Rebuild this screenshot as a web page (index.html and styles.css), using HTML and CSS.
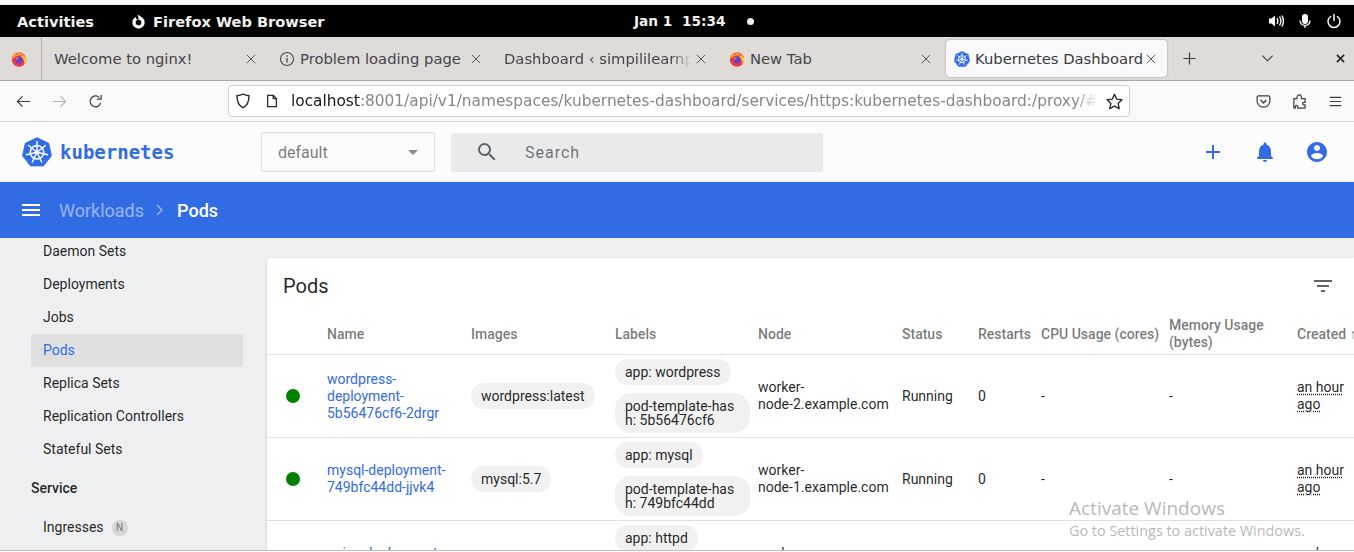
FILE: index.html
```html
<!DOCTYPE html>
<html lang="en">
<head>
<meta charset="utf-8">
<title>Kubernetes Dashboard</title>
<link rel="stylesheet" href="styles.css">
</head>
<body>
<svg class="defs" width="0" height="0" aria-hidden="true">
  <defs>
    <symbol id="fx" viewBox="0 0 16 16">
      <circle cx="8" cy="8.6" r="7.2" fill="#e8384f"/>
      <path d="M1 8.5C1 5 3 2.6 5 1.6 4.8 2.6 5 3.4 5.6 3.8 7 1.6 9.4.8 10.6.8 10 1.6 10 2.4 10.6 3c2 .2 4 2.2 4.4 5C14 5 11 4 8 4.4 5 4.8 3 6 1 8.5Z" fill="#ff9a2e"/>
      <path d="M15.2 7.6c.3 3-1.2 5-2.8 6 1-1.6 1-3.4 0-5-.6-1.6-1.8-3-3.6-3.6 3-.6 5.6.4 6.4 2.6Z" fill="#ffc42e"/>
      <circle cx="8" cy="8.8" r="3.6" fill="#6b3fc4"/>
      <path d="M4.4 8c.8-1.4 2.2-2 3.8-1.600C7 6.800 6.400 7.400 6.600 8.400 5.600 8.800 5 8.600 4.400 8Z" fill="#ff7a3c"/>
    </symbol>
    <symbol id="k8s" viewBox="0 0 32 32">
      <path d="M16 .8 28.400 6.700 31.400 20 22.900 30.800H9.100L.6 20 3.600 6.700Z" fill="#326ce5" stroke="#326ce5" stroke-linejoin="round"/>
      <g fill="none" stroke="#fff">
        <circle cx="16" cy="16.300" r="7.200" stroke-width="1.700"/>
        <path stroke-width="1.500" stroke-linecap="round" d="M16 16.300V4.800M16 16.300 25 9.100M16 16.300 27.200 18.900M16 16.300 21 26.700M16 16.300 11 26.700M16 16.300 4.800 18.900M16 16.300 7 9.100"/>
      </g>
      <circle cx="16" cy="16.300" r="2" fill="#fff"/>
    </symbol>
    <symbol id="close" viewBox="0 0 10 10">
      <path stroke="#55555c" stroke-width="1" d="M.8.8l8.400 8.400M9.200.8.800 9.200"/>
    </symbol>
  </defs>
</svg>

<div class="strip"></div>

<header class="gnome">
  <span class="act">Activities</span>
  <span class="app">
    <svg class="app-ico" viewBox="0 0 16 16"><circle cx="8" cy="9" r="4.800" fill="none" stroke="#fff" stroke-width="3.600"/><path fill="#000" d="M4 1h4l1 4.500-3 .3Z"/><path fill="#fff" d="M7 .8 10.500 2.500 8.500 5.800Z"/></svg>
    Firefox Web Browser
  </span>
  <span class="clock">Jan 1&nbsp; 15:34</span>
  <span class="dot"></span>
  <span class="tray">
    <svg class="tray-ico" viewBox="0 0 16 16"><path fill="#fff" d="M1 5.500h2.500L7 2.500v11l-3.500-3H1Z"/><path fill="none" stroke="#fff" stroke-width="1.400" d="M9 5c1 1.800 1 4.200 0 6M11.500 3.500c1.700 2.700 1.700 6.300 0 9M13.800 2.500c2 3.300 2 7.700 0 11"/></svg>
    <svg class="tray-ico" viewBox="0 0 16 16"><rect x="5" y="1" width="6" height="10" rx="3" fill="#fff"/><path fill="none" stroke="#fff" stroke-width="1.300" d="M3 7.500c0 3 2.200 4.800 5 4.800s5-1.800 5-4.800M8 12.300V15"/></svg>
    <svg class="tray-ico" viewBox="0 0 16 16"><path fill="none" stroke="#fff" stroke-width="1.500" stroke-linecap="round" d="M8 1.500v6M4.600 3.500a6 6 0 1 0 6.800 0"/></svg>
  </span>
</header>

<nav class="tabbar">
  <div class="pinned"><svg class="fav"><use href="#fx"/></svg></div>
  <div class="tab"><span class="tab-text">Welcome to nginx!</span><svg class="x"><use href="#close"/></svg></div>
  <div class="tab">
    <svg class="fav" viewBox="0 0 16 16"><circle cx="8" cy="8" r="6.500" fill="none" stroke="#45454c" stroke-width="1.100"/><path stroke="#45454c" stroke-width="1.300" d="M8 7v4.500M8 4.300v1.400"/></svg>
    <span class="tab-text">Problem loading page</span><svg class="x"><use href="#close"/></svg>
  </div>
  <div class="tab"><span class="tab-text fade">Dashboard ‹ simpililearnp</span><svg class="x"><use href="#close"/></svg></div>
  <div class="tab"><svg class="fav"><use href="#fx"/></svg><span class="tab-text">New Tab</span><svg class="x"><use href="#close"/></svg></div>
  <div class="tab active"><svg class="fav"><use href="#k8s"/></svg><span class="tab-text">Kubernetes Dashboard</span><svg class="x"><use href="#close"/></svg></div>
  <svg class="newtab" viewBox="0 0 14 14"><path stroke="#3a3a40" stroke-width="1.300" d="M7 .5v13M.5 7h13"/></svg>
  <svg class="chev" viewBox="0 0 14 14"><path fill="none" stroke="#3a3a40" stroke-width="1.200" d="M1.500 4 7 9.500 12.500 4"/></svg>
  <svg class="winx" viewBox="0 0 10 10"><path stroke="#26262a" stroke-width="1.800" d="M1 1l8 8M9 1 1 9"/></svg>
</nav>

<div class="toolbar">
  <svg class="nav-ico" viewBox="0 0 16 16"><path fill="none" stroke="#3d3d42" stroke-width="1.300" d="M15 8H1.500M7 2.500 1.500 8 7 13.500"/></svg>
  <svg class="nav-ico" viewBox="0 0 16 16"><path fill="none" stroke="#b4b4b8" stroke-width="1.300" d="M1 8h13.500M9 2.500 14.500 8 9 13.500"/></svg>
  <svg class="nav-ico" viewBox="0 0 16 16"><path fill="none" stroke="#3d3d42" stroke-width="1.300" d="M13.600 9.500A5.800 5.800 0 1 1 12 3.600M14 1v4.500H9.500"/></svg>
  <div class="urlbar">
    <svg class="shield" viewBox="0 0 16 16"><path fill="none" stroke="#2b2b30" stroke-width="1.400" d="M8 1.200c2 1 4 1.400 6 1.500 0 5.500-1.800 10-6 12.100C3.800 12.700 2 8.200 2 2.700c2-.1 4-.5 6-1.500Z"/></svg>
    <svg class="page" viewBox="0 0 16 16"><path fill="none" stroke="#2b2b30" stroke-width="1.500" stroke-linejoin="round" d="M3 1.500h6.500L13 5v9.500H3ZM9.300 1.500V5.200H13"/></svg>
    <span class="url"><b>localhost</b>:8001/api/v1/namespaces/kubernetes-dashboard/services/https:kubernetes-dashboard:/proxy/#</span>
    <svg class="star" viewBox="0 0 16 16"><path fill="none" stroke="#2b2b30" stroke-width="1.300" stroke-linejoin="round" d="M8 1.200 10.100 5.800 15 6.400 11.400 9.800 12.400 14.800 8 12.300 3.600 14.800 4.600 9.800 1 6.400 5.900 5.800Z"/></svg>
  </div>
  <div class="tools">
    <svg class="tool" viewBox="0 0 16 16"><path fill="none" stroke="#3d3d42" stroke-width="1.300" stroke-linejoin="round" d="M2.500 2h11c.8 0 1.300.5 1.300 1.300v3.900c0 3.900-3 6.800-6.800 6.800s-6.800-2.900-6.800-6.800V3.300C1.200 2.500 1.700 2 2.500 2Z"/><path fill="none" stroke="#3d3d42" stroke-width="1.500" d="M5 6.500 8 9.500 11 6.500"/></svg>
    <svg class="tool" viewBox="0 0 16 16"><path fill="none" stroke="#3d3d42" stroke-width="1.300" stroke-linejoin="round" d="M2 5h3.500C5 2.500 6 1 7.700 1s2.700 1.500 2.200 4H14v4h-1.500c-1.500 0-1.500 2.500 0 2.500H14V15H6v-1.500c0-1.800-2.500-1.800-2.500 0V15H2Z"/></svg>
    <svg class="tool" viewBox="0 0 16 16"><path stroke="#3d3d42" stroke-width="1.300" d="M2 3.500h12M2 8h12M2 12.500h12"/></svg>
  </div>
</div>

<div class="kd-top">
  <div class="brand"><svg class="logo"><use href="#k8s"/></svg><span class="word">kubernetes</span></div>
  <div class="ns"><span>default</span><i class="caret"></i></div>
  <div class="search">
    <svg class="mag" viewBox="0 0 24 24"><path fill="#5f6368" d="M15.500 14h-.79l-.28-.27A6.470 6.470 0 0 0 16 9.500 6.500 6.500 0 1 0 9.500 16c1.610 0 3.090-.59 4.230-1.570l.27.28v.79l5 4.990L20.490 19l-4.990-5Zm-6 0C7.010 14 5 11.990 5 9.500S7.010 5 9.500 5 14 7.010 14 9.500 11.990 14 9.500 14Z"/></svg>
    <span>Search</span>
  </div>
  <div class="actions">
    <svg class="act-ico" viewBox="0 0 24 24"><path fill="#326ce5" d="M19 13h-6v6h-2v-6H5v-2h6V5h2v6h6v2Z"/></svg>
    <svg class="act-ico" viewBox="0 0 24 24"><path fill="#326ce5" d="M12 22c1.100 0 2-.9 2-2h-4c0 1.100.9 2 2 2Zm6-6v-5c0-3.070-1.630-5.640-4.500-6.320V4c0-.83-.67-1.500-1.500-1.500s-1.500.67-1.500 1.500v.68C7.640 5.360 6 7.920 6 11v5l-2 2v1h16v-1l-2-2Z"/></svg>
    <svg class="act-ico" viewBox="0 0 24 24"><path fill="#326ce5" d="M12 2C6.480 2 2 6.480 2 12s4.480 10 10 10 10-4.480 10-10S17.520 2 12 2Zm0 3c1.660 0 3 1.340 3 3s-1.340 3-3 3-3-1.340-3-3 1.340-3 3-3Zm0 14.200a7.200 7.200 0 0 1-6-3.220c.03-1.990 4-3.080 6-3.080s5.970 1.090 6 3.080a7.200 7.200 0 0 1-6 3.220Z"/></svg>
  </div>
</div>

<div class="bluebar">
  <svg class="burger" viewBox="0 0 18 12"><path fill="#fff" d="M0 12h18v-2H0v2Zm0-5h18V5H0v2Zm0-7v2h18V0H0Z"/></svg>
  <span class="crumb">Workloads</span>
  <svg class="crumb-sep" viewBox="0 0 8 12"><path fill="none" stroke="#9bb8f2" stroke-width="1.400" d="M1 1l5 5-5 5"/></svg>
  <span class="crumb-now">Pods</span>
</div>

<main class="main">
  <aside class="side">
    <ul class="side-list">
      <li class="side-item">Daemon Sets</li>
      <li class="side-item">Deployments</li>
      <li class="side-item">Jobs</li>
      <li class="side-item on">Pods</li>
      <li class="side-item">Replica Sets</li>
      <li class="side-item">Replication Controllers</li>
      <li class="side-item">Stateful Sets</li>
      <li class="side-head">Service</li>
      <li class="side-item ing">Ingresses <span class="badge">N</span></li>
    </ul>
  </aside>
  <section class="card">
    <div class="card-title">
      <h1>Pods</h1>
      <svg class="filter" viewBox="0 0 18 12"><path fill="#5f6368" d="M7 12h4v-2H7v2ZM0 0v2h18V0H0Zm3 7h12V5H3v2Z"/></svg>
    </div>
    <div class="row head">
      <span></span><span>Name</span><span>Images</span><span>Labels</span><span>Node</span><span>Status</span><span>Restarts</span><span>CPU Usage (cores)</span><span>Memory Usage (bytes)</span><span class="created">Created <i class="sort">↑</i></span>
    </div>
    <div class="row">
      <i class="ok"></i>
      <a class="pod">wordpress-deployment-5b56476cf6-2drgr</a>
      <div><span class="chip">wordpress:latest</span></div>
      <div class="labels"><span class="chip">app: wordpress</span><span class="chip">pod-template-hash: 5b56476cf6</span></div>
      <span>worker-<br>node-2.example.com</span><span>Running</span><span>0</span><span>-</span><span>-</span>
      <span class="age"><u>an hour</u> <u>ago</u></span>
    </div>
    <div class="row">
      <i class="ok"></i>
      <a class="pod">mysql-deployment-749bfc44dd-jjvk4</a>
      <div><span class="chip">mysql:5.7</span></div>
      <div class="labels"><span class="chip">app: mysql</span><span class="chip">pod-template-hash: 749bfc44dd</span></div>
      <span>worker-<br>node-1.example.com</span><span>Running</span><span>0</span><span>-</span><span>-</span>
      <span class="age"><u>an hour</u> <u>ago</u></span>
    </div>
    <div class="row">
      <i class="ok"></i>
      <a class="pod">nginx-deployment-7fb96c846b-8xk2p</a>
      <div class="low"><span class="chip">httpd:latest</span></div>
      <div class="labels"><span class="chip">app: httpd</span><span class="chip">pod-template-hash: 7fb96c846b</span></div>
      <span>worker-<br>node-1.example.com</span><span>Running</span><span>0</span><span>-</span><span>-</span>
      <span class="age"><u>an hour</u> <u>ago</u></span>
    </div>
  </section>
  <div class="watermark">
    <div class="wm1">Activate Windows</div>
    <div class="wm2">Go to Settings to activate Windows.</div>
  </div>
</main>
<div class="foot"></div>
</body>
</html>
```

FILE: styles.css
```css
* { box-sizing: border-box; }
html, body { margin: 0; padding: 0; }
body {
  width: 1354px;
  height: 552px;
  overflow: hidden;
  background: #fff;
  font-family: "Roboto", sans-serif;
  font-size: 14px;
  color: rgba(0, 0, 0, .87);
}
svg { display: block; flex: none; }
.defs { position: absolute; }

.strip { height: 5px; background: #fafafa; border-bottom: 1px solid #e6e6e6; }

/* GNOME bar */
.gnome {
  height: 32px;
  background: #000;
  color: #f2f2f2;
  display: flex;
  align-items: center;
  font-family: "DejaVu Sans", sans-serif;
  font-weight: 700;
  font-size: 14.6px;
  padding-left: 17px;
}
.act { width: 114px; }
.app { display: flex; align-items: center; gap: 7px; width: 503px; }
.app-ico { width: 15px; height: 15px; }
.clock { width: 113px; font-size: 13.7px; }
.dot { width: 7px; height: 7px; border-radius: 50%; background: #f2f2f2; }
.tray { margin-left: auto; display: flex; align-items: center; gap: 13px; padding-right: 12px; }
.tray-ico { width: 16px; height: 16px; }

/* tabs */
.tabbar {
  height: 44px;
  background: #dedbd8;
  border-bottom: 1px solid #a9a7a5;
  display: flex;
  align-items: center;
  font-family: "DejaVu Sans", sans-serif;
  font-size: 14.75px;
  color: #45454c;
}
.pinned {
  width: 42px;
  height: 43px;
  border-right: 1px solid #b5b3b1;
  display: flex;
  align-items: center;
  padding-left: 11px;
}
.fav { width: 16px; height: 16px; }
.tab {
  width: 225px;
  height: 36px;
  display: flex;
  align-items: center;
  gap: 5px;
  padding: 0 11px 0 12px;
  flex: none;
}
.tab-text { flex: 1; white-space: nowrap; overflow: hidden; min-width: 0; }
.fade {
  -webkit-mask-image: linear-gradient(90deg, #000 90%, transparent 100%);
  mask-image: linear-gradient(90deg, #000 90%, transparent 100%);
}
.x { width: 10px; height: 10px; }
.active {
  width: 221px;
  height: 37px;
  margin-left: 4px;
  background: #f9f9fb;
  border-radius: 4px;
  box-shadow: 0 0 2px rgba(0, 0, 0, .35);
  padding-left: 8px;
  color: #3a3a40;
}
.active .tab-text { overflow: visible; }
.newtab { width: 13px; height: 13px; margin-left: 16px; }
.chev { width: 13px; height: 13px; margin-left: 65px; }
.winx { width: 9px; height: 9px; margin-left: 62px; }

/* toolbar */
.toolbar {
  height: 41px;
  background: #f9f9fb;
  border-bottom: 1px solid #d6d6d8;
  display: flex;
  align-items: center;
  padding-left: 16px;
}
.nav-ico { width: 15px; height: 15px; margin-right: 21px; }
.nav-ico:nth-child(3) { margin-right: 0; }
.urlbar {
  width: 902px;
  height: 32px;
  margin-left: 125px;
  background: #fff;
  border: 1px solid #cfcfd8;
  border-radius: 4px;
  display: flex;
  align-items: center;
  padding: 0 6px;
  font-family: "DejaVu Sans", sans-serif;
  font-size: 15.35px;
}
.shield { width: 16px; height: 16px; }
.page { width: 14px; height: 14px; margin-left: 14px; }
.url {
  flex: 1;
  min-width: 0;
  margin-left: 12px;
  color: #85858c;
  white-space: nowrap;
  overflow: hidden;
  -webkit-mask-image: linear-gradient(90deg, #000 97%, transparent 100%);
  mask-image: linear-gradient(90deg, #000 97%, transparent 100%);
}
.url b { font-weight: 400; color: #15141a; }
.star { width: 17px; height: 17px; margin-left: 8px; }
.tools { display: flex; align-items: center; gap: 21px; margin-left: 126px; }
.tool { width: 15px; height: 15px; }

/* dashboard top */
.kd-top {
  height: 60px;
  background: #fcfcfd;
  display: flex;
  align-items: center;
}
.brand { width: 261px; display: flex; align-items: center; padding-left: 22px; gap: 8px; }
.logo { width: 30px; height: 30px; }
.word {
  font-family: "DejaVu Sans Mono", monospace;
  font-weight: 700;
  font-size: 19px;
  color: #326ce5;
}
.ns {
  width: 174px;
  height: 40px;
  border: 1px solid #dcdcdc;
  border-radius: 2px;
  display: flex;
  align-items: center;
  justify-content: space-between;
  padding: 0 16px;
  font-size: 16px;
  color: rgba(0, 0, 0, .54);
}
.caret {
  border-left: 5px solid transparent;
  border-right: 5px solid transparent;
  border-top: 5px solid #8a8a8a;
}
.search {
  width: 372px;
  height: 39px;
  margin-left: 16px;
  background: #e8eaeb;
  border-radius: 2px;
  display: flex;
  align-items: center;
  padding-left: 24px;
  font-size: 16px;
  color: rgba(0, 0, 0, .54);
  letter-spacing: 1px;
}
.mag { width: 24px; height: 24px; margin-right: 26px; }
.actions { margin-left: auto; display: flex; gap: 28px; padding-right: 25px; }
.act-ico { width: 24px; height: 24px; }

/* blue bar */
.bluebar {
  height: 56px;
  background: #326ce5;
  display: flex;
  align-items: center;
  padding-left: 22px;
  font-size: 18px;
  font-weight: 500;
  color: #fff;
  box-shadow: 0 1px 3px rgba(0, 0, 0, .3);
  position: relative;
}
.burger { width: 18px; height: 12px; margin-right: 19px; }
.crumb { color: rgba(255, 255, 255, .5); font-weight: 400; }
.crumb-sep { width: 8px; height: 12px; margin: 0 13px 0 12px; }

/* main */
.main {
  height: 312px;
  background: #eeeff1;
  display: flex;
  overflow: hidden;
  position: relative;
}
.side { width: 267px; flex: none; padding-left: 31px; padding-right: 24px; }
.side-list { list-style: none; margin: -3px 0 0; padding: 0; }
.side-item {
  height: 33px;
  line-height: 33px;
  padding-left: 12px;
  border-radius: 2px;
}
.side-item.on { background: #dfdfdf; color: #326ce5; }
.side-head { height: 33px; line-height: 33px; margin-top: 6px; font-weight: 500; }
.ing { margin-top: 6px; display: flex; align-items: center; gap: 8px; }
.badge {
  width: 16px;
  height: 16px;
  border-radius: 50%;
  background: #d6d6d6;
  color: #777;
  font-size: 10px;
  line-height: 16px;
  text-align: center;
}

.card {
  width: 1087px;
  height: 400px;
  margin-top: 20px;
  background: #fff;
  border-radius: 4px 0 0 0;
  box-shadow: 0 1px 3px rgba(0, 0, 0, .2);
  overflow: hidden;
  flex: none;
}
.card-title {
  height: 55px;
  display: flex;
  align-items: center;
  justify-content: space-between;
  padding: 2px 22px 2px 16px;
}
.card-title h1 { margin: 0; font-size: 20px; font-weight: 400; }
.filter { width: 18px; height: 12px; }

.row {
  display: grid;
  grid-template-columns: 60px 144px 144px 143px 144px 76px 63px 128px 128px 57px;
  align-items: center;
  height: 83px;
  border-bottom: 1px solid #e0e0e0;
  line-height: 17px;
}
.row.head {
  height: 42px;
  padding-top: 1px;
  color: rgba(0, 0, 0, .54);
  font-weight: 500;
}
.row > * { padding-right: 8px; min-width: 0; }
.row > :last-child { padding-right: 0; }
.head .created { white-space: nowrap; }
.sort { font-style: normal; }
.ok {
  display: block;
  width: 14px;
  height: 14px;
  padding: 0;
  margin-left: 19px;
  border-radius: 50%;
  background: #008000;
}
.pod { color: #326ce5; }
.chip {
  display: inline-block;
  background: #f1f1f1;
  border-radius: 13px;
  padding: 6px 10px;
  line-height: 14px;
  word-break: break-all;
  max-width: 135px;
}
.low { margin-top: 6px; }
.labels { display: flex; flex-direction: column; align-items: flex-start; gap: 8px; padding-right: 0; }
.labels .chip:last-child { border-radius: 16px; }
.age u { text-decoration: underline dotted; text-underline-offset: 2px; }

.watermark {
  position: absolute;
  left: 1069px;
  top: 258px;
  font-family: "Open Sans", sans-serif;
  color: rgba(120, 120, 120, .55);
}
.wm1 { font-size: 19px; line-height: 25px; }
.wm2 { font-size: 14.4px; line-height: 20px; }

.foot { height: 2px; background: #fff; border-top: 1px solid #bdbdbd; }
```
